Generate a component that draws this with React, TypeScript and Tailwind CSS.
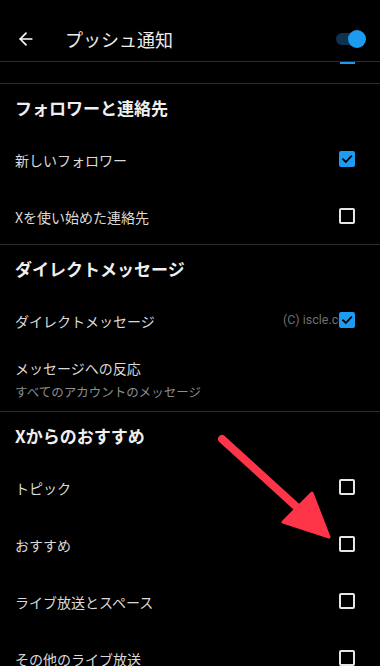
import { ArrowLeft } from 'lucide-react'

type Row = { label: string; sub?: string; checked?: boolean; box?: boolean; mark?: boolean }

const SECTIONS: { title: string; rows: Row[] }[] = [
  {
    title: 'フォロワーと連絡先',
    rows: [
      { label: '新しいフォロワー', checked: true, box: true },
      { label: 'Xを使い始めた連絡先', box: true },
    ],
  },
  {
    title: 'ダイレクトメッセージ',
    rows: [
      { label: 'ダイレクトメッセージ', checked: true, box: true, mark: true },
      { label: 'メッセージへの反応', sub: 'すべてのアカウントのメッセージ' },
    ],
  },
  {
    title: 'Xからのおすすめ',
    rows: [
      { label: 'トピック', box: true },
      { label: 'おすすめ', box: true },
      { label: 'ライブ放送とスペース', box: true },
      { label: 'その他のライブ放送', box: true },
    ],
  },
]

function Checkbox({ checked }: { checked?: boolean }) {
  if (checked) {
    return (
      <span className="relative z-10 w-[16px] h-[16px] rounded-[2px] bg-[#1d9bf0] flex items-center justify-center">
        <svg width="12" height="12" viewBox="0 0 12 12" fill="none">
          <path d="M2 6.2 L4.8 9 L10.2 3.2" stroke="#000" strokeWidth="1.8" strokeLinecap="square" />
        </svg>
      </span>
    )
  }
  return <span className="w-[16px] h-[16px] rounded-[2px] border-2 border-[#e6e6e6]" />
}

export default function App() {
  return (
    <div
      className="relative w-[380px] h-[666px] overflow-hidden bg-black"
      style={{ fontFamily: '"Noto Sans CJK JP", "Noto Sans", Roboto, sans-serif' }}
    >
      <header className="h-[62px] pt-[16px] flex items-center border-b border-[#2a2d30]">
        <ArrowLeft className="ml-[16px] w-[20px] h-[20px] text-white" strokeWidth={2} />
        <h1 className="ml-[29px] text-[18px] text-[#ececec] leading-none">プッシュ通知</h1>
        <div className="ml-auto mr-[14px] relative w-[30px] h-[18px] flex items-center">
          <span className="absolute left-0 w-[22px] h-[12px] rounded-full bg-[#0d3350]" />
          <span className="absolute right-0 w-[18px] h-[18px] rounded-full bg-[#1d9bf0]" />
        </div>
      </header>

      <div className="h-[22px] border-b border-[#2a2d30] flex justify-end pr-[25px]">
        <span className="w-[15px] h-[2px] bg-[#1d9bf0]" />
      </div>

      {SECTIONS.map((s, i) => (
        <section key={s.title} className={i < SECTIONS.length - 1 ? 'border-b border-[#2a2d30]' : ''}>
          <h2 className="h-[46px] pt-[2px] flex items-center px-[15px] text-[17px] font-bold text-[#efefef]">{s.title}</h2>
          {s.rows.map((r) =>
            r.sub ? (
              <div key={r.label} className="px-[15px] pt-[10px] pb-[10px]">
                <p className="text-[14px] leading-[20px] text-[#dadada]">{r.label}</p>
                <p className="mt-[5px] text-[12.5px] leading-[18px] text-[#8a8d91]">{r.sub}</p>
              </div>
            ) : (
              <div key={r.label} className="relative h-[57px] flex items-center pl-[15px] pr-[25px]">
                <span className="flex-1 pt-[3px] text-[14px] text-[#dadada]">{r.label}</span>
                {r.mark && (
                  <span
                    className="absolute left-[283px] pt-[2px] text-[12.5px] text-[#6f6f6f]"
                    style={{ fontFamily: 'Roboto, sans-serif' }}
                  >
                    (C) iscle.co
                  </span>
                )}
                {r.box && <Checkbox checked={r.checked} />}
              </div>
            )
          )}
        </section>
      ))}

      <svg className="absolute left-0 top-0 pointer-events-none" width="380" height="666" viewBox="0 0 380 666">
        <line x1="222" y1="439" x2="300" y2="510" stroke="#fe3449" strokeWidth="8" strokeLinecap="round" />
        <path d="M283 522 L312 493 L329 537 Z" fill="#fe3449" stroke="#fe3449" strokeWidth="3" strokeLinejoin="round" />
      </svg>
    </div>
  )
}
